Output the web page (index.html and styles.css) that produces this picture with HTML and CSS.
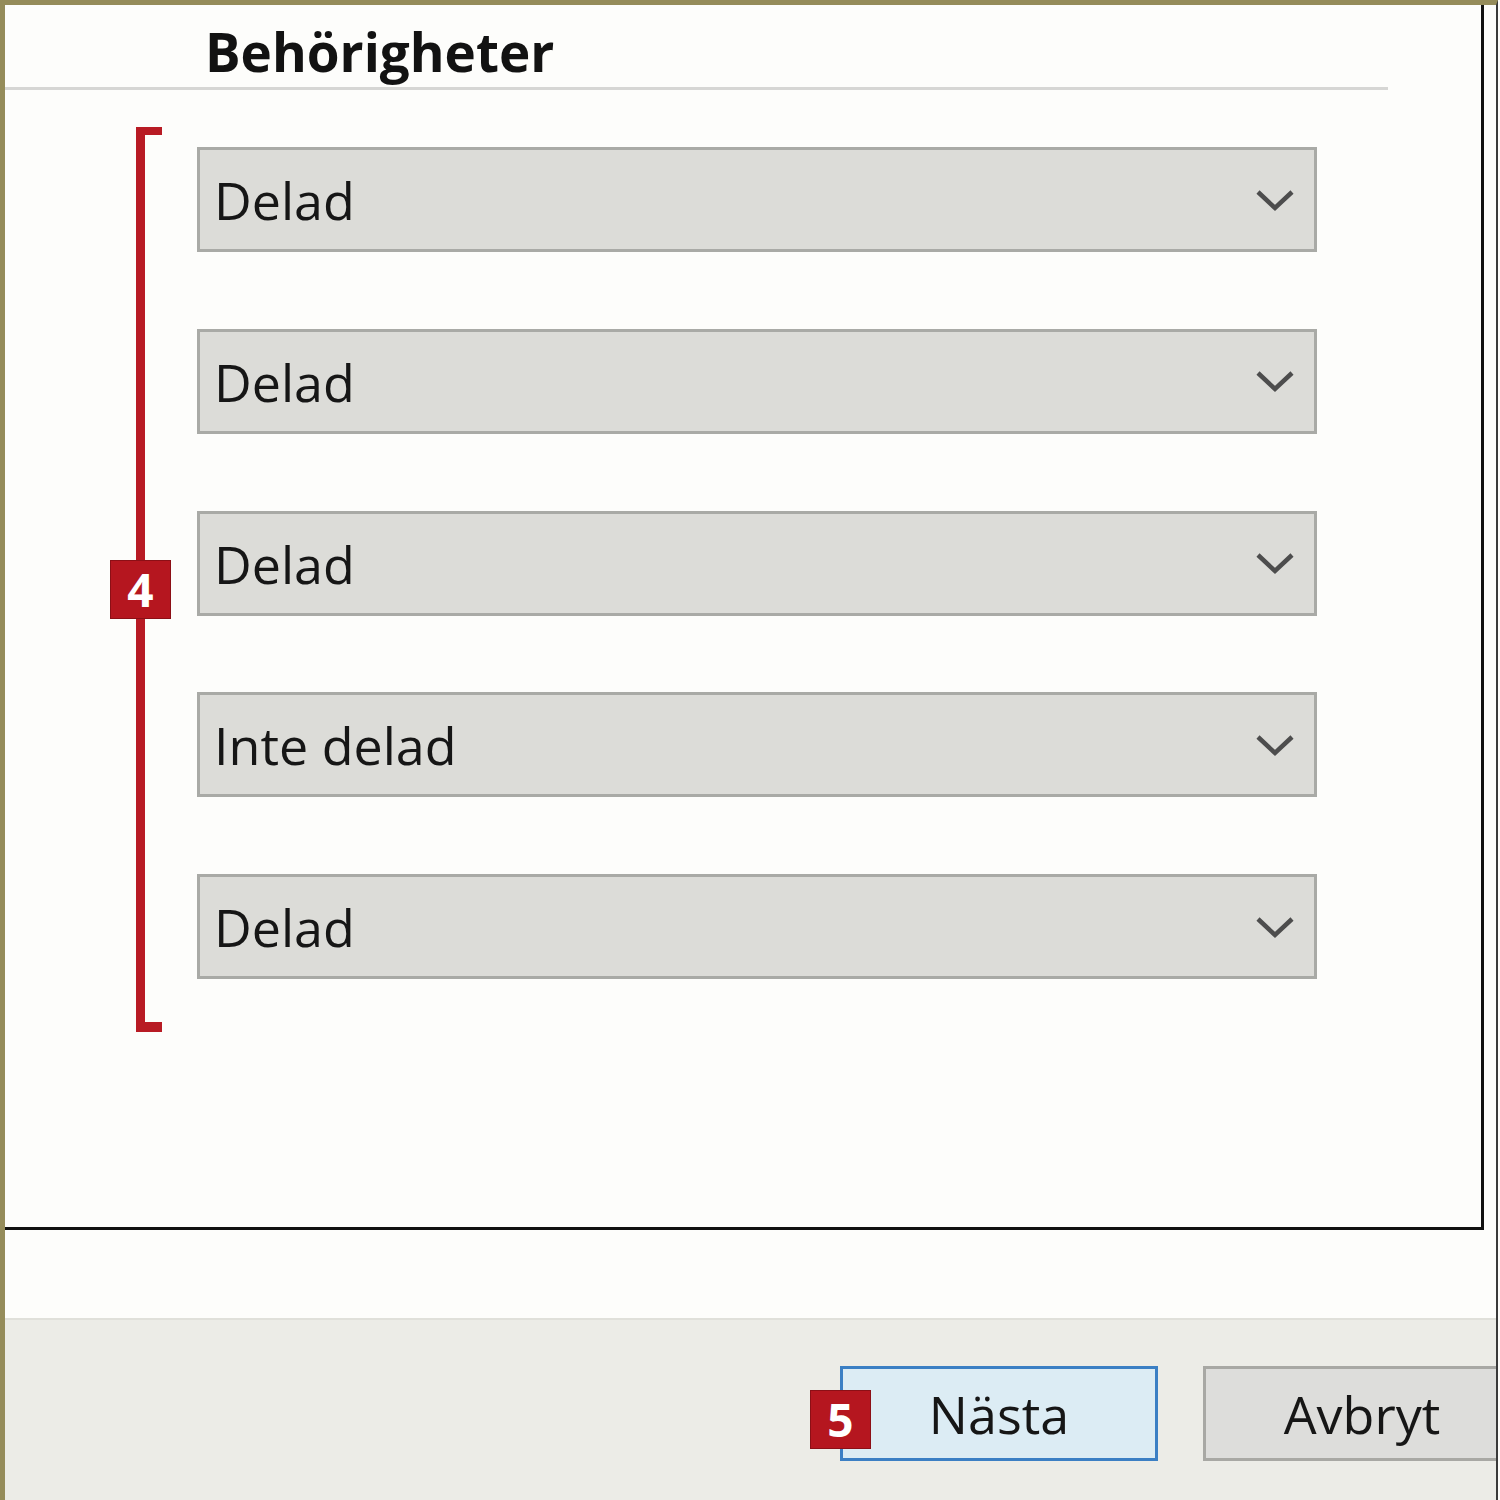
FILE: index.html
```html
<!DOCTYPE html>
<html lang="sv">
<head>
    <meta charset="UTF-8">
    <title>Behörigheter</title>
    <link rel="stylesheet" href="styles.css">
</head>
<body>

<div class="window">
    <div class="panel">
        <h2 class="rubrik">Behörigheter</h2>
        <div class="linje"></div>

        <div class="innehall">
            <div class="klammer">
                <span class="markering markering-4">4</span>
            </div>

            <div class="lista">
                <div class="combo"><span>Delad</span><svg class="pil" width="40" height="24" viewBox="0 0 40 24"><polyline points="3,4 20,20 37,4"/></svg></div>
                <div class="combo"><span>Delad</span><svg class="pil" width="40" height="24" viewBox="0 0 40 24"><polyline points="3,4 20,20 37,4"/></svg></div>
                <div class="combo"><span>Delad</span><svg class="pil" width="40" height="24" viewBox="0 0 40 24"><polyline points="3,4 20,20 37,4"/></svg></div>
                <div class="combo"><span>Inte delad</span><svg class="pil" width="40" height="24" viewBox="0 0 40 24"><polyline points="3,4 20,20 37,4"/></svg></div>
                <div class="combo"><span>Delad</span><svg class="pil" width="40" height="24" viewBox="0 0 40 24"><polyline points="3,4 20,20 37,4"/></svg></div>
            </div>
        </div>
    </div>

    <div class="fot">
        <button class="knapp knapp-nasta">
            <span class="markering markering-5">5</span>
            Nästa
        </button>
        <button class="knapp">Avbryt</button>
    </div>
</div>

</body>
</html>
```

FILE: styles.css
```css
body {
    margin: 0;
    background-color: #fdfdfb;
    font-family: "Open Sans", "Noto Sans", sans-serif;
}
.window {
    width: 1498px;
    height: 1500px;
    box-sizing: border-box;
    border-top: 5px solid #958c5a;
    border-left: 5px solid #958c5a;
    border-right: 2px solid #3a3a3a;
    background-color: #fdfdfb;
    display: flex;
    flex-direction: column;
    overflow: hidden;
}
.panel {
    width: 1479px;
    height: 1225px;
    flex-shrink: 0;
    box-sizing: border-box;
    border-right: 3px solid #111;
    border-bottom: 3px solid #111;
    background-color: #fdfdfb;
}
.rubrik {
    margin: 0;
    padding: 11px 0 0 200px;
    font-size: 53px;
    font-weight: bold;
    line-height: 71px;
    color: #121212;
}
.linje {
    width: 1383px;
    height: 3px;
    background-color: #d6d6d4;
}
.innehall {
    display: flex;
    gap: 35px;
    padding: 37px 0 0 131px;
}
.klammer {
    position: relative;
    width: 17px;
    height: 887px;
    border-left: 9px solid #b81b24;
    border-top: 8px solid #b81b24;
    border-bottom: 10px solid #b81b24;
}
.markering {
    position: absolute;
    width: 61px;
    height: 59px;
    box-sizing: border-box;
    background-color: #b5161f;
    border: 1px solid #8c0f16;
    color: #fff;
    font-family: "Open Sans", sans-serif;
    font-size: 46px;
    font-weight: bold;
    line-height: 56px;
    text-align: center;
}
.markering-4 {
    left: -35px;
    top: 425px;
}
.lista {
    display: flex;
    flex-direction: column;
    gap: 76.75px;
    padding-top: 20px;
}
.combo {
    width: 1120px;
    height: 105px;
    box-sizing: border-box;
    border: 3px solid #a9aaa6;
    background-color: #dcdcd8;
    display: flex;
    align-items: center;
    justify-content: space-between;
    padding: 0 19px 0 14px;
    font-size: 52px;
    color: #161616;
}
.pil {
    fill: none;
    stroke: #4d4d4d;
    stroke-width: 4.5;
}
.fot {
    flex: 1;
    margin-top: 88px;
    border-top: 2px solid #e0e0da;
    background-color: #ecece7;
    display: flex;
    gap: 45px;
    padding: 46px 0 0 835px;
}
.knapp {
    position: relative;
    flex-shrink: 0;
    width: 318px;
    height: 95px;
    box-sizing: border-box;
    border: 3px solid #a8a8a4;
    background-color: #dddddb;
    font-family: "Open Sans", "Noto Sans", sans-serif;
    font-size: 52px;
    color: #161616;
    padding: 0;
}
.knapp-nasta {
    border-color: #3b7fc4;
    background-color: #dcecf4;
}
.markering-5 {
    left: -33px;
    top: 21px;
}
```
